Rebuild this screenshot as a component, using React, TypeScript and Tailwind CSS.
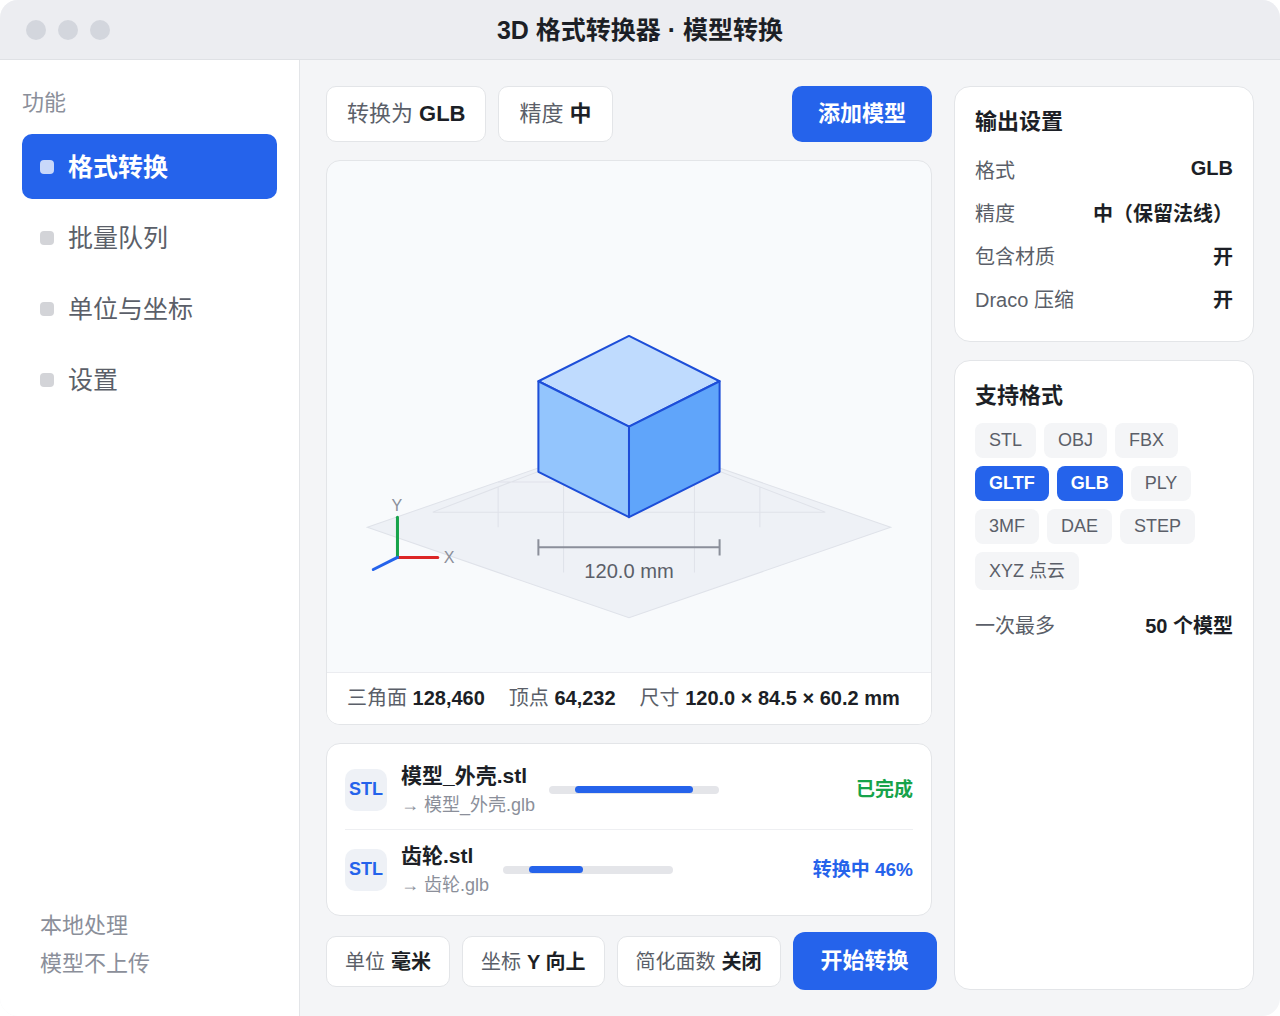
import React from 'react'

const navItems = ['格式转换', '批量队列', '单位与坐标', '设置']

const outputRows = [
  ['格式', 'GLB'],
  ['精度', '中（保留法线）'],
  ['包含材质', '开'],
  ['Draco 压缩', '开'],
]

const formats = ['STL', 'OBJ', 'FBX', 'GLTF', 'GLB', 'PLY', '3MF', 'DAE', 'STEP', 'XYZ 点云']
const activeFormats = ['GLTF', 'GLB']

const files = [
  { name: '模型_外壳', status: '已完成', tone: 'text-[#16a34a]', fill: 118 },
  { name: '齿轮', status: '转换中 46%', tone: 'text-[#2563eb]', fill: 54 },
]

const isLatin = (text: string) => /^[\w ]+$/.test(text)

function Option({ label, value, large = false }: { label: string; value: string; large?: boolean }) {
  return (
    <button
      type="button"
      className={`flex shrink-0 items-center gap-[6px] whitespace-nowrap rounded-[10px] border border-[#e3e5e8] bg-white text-[#5b5f69] ${
        large ? 'h-14 px-5 pb-px text-[22px]' : 'px-[18px] pt-[11px] pb-[9px] text-xl/[29px]'
      }`}
    >
      <span>{label}</span>
      <b className="font-bold text-[#1c1f26]">{value}</b>
    </button>
  )
}

function Row({ label, value }: { label: string; value: string }) {
  return (
    <div className="flex justify-between py-[7px] text-xl/[29px]">
      <dt className="text-[#5b5f69]">{label}</dt>
      <dd className={`font-bold text-[#1c1f26] ${isLatin(value) ? 'leading-[normal]' : ''}`}>{value}</dd>
    </div>
  )
}

function Viewport() {
  return (
    <svg viewBox="0 0 600 420" className="min-h-0 w-full flex-1" role="img" aria-label="模型预览">
      <polygon points="300,230 560,320 300,410 40,320" fill="#eef1f6" stroke="#dfe2e9" />
      <path
        d="M105 305H495M170 275H300M105 305L300 230L495 305M170 280V320M235 255V365M365 255V365M430 280V320"
        fill="none"
        stroke="#dfe2e9"
      />
      <g stroke="#1d4ed8" strokeWidth="2" strokeLinejoin="round">
        <polygon points="300,130 390,175 300,220 210,175" fill="#bfdbfe" />
        <polygon points="210,175 300,220 300,310 210,265" fill="#93c5fd" />
        <polygon points="390,175 300,220 300,310 390,265" fill="#60a5fa" />
      </g>
      <path d="M210 340H390M210 332V348M390 332V348" fill="none" stroke="#8b8f9a" strokeWidth="2" />
      <text x="300" y="370" textAnchor="middle" fontSize="20" fill="#5b5f69">
        120.0 mm
      </text>
      <g strokeWidth="3" strokeLinecap="round">
        <line x1="70" y1="350" x2="110" y2="350" stroke="#dc2626" />
        <line x1="70" y1="350" x2="70" y2="310" stroke="#16a34a" />
        <line x1="70" y1="350" x2="46" y2="362" stroke="#2563eb" />
      </g>
      <text x="116" y="356" fontSize="16" fill="#8b8f9a">
        X
      </text>
      <text x="64" y="304" fontSize="16" fill="#8b8f9a">
        Y
      </text>
    </svg>
  )
}

export default function App() {
  return (
    <div className="flex min-h-screen flex-col overflow-hidden rounded-[18px] bg-[#f4f5f7] font-['Liberation_Sans','Noto_Sans_CJK_SC',sans-serif] text-[#1c1f26]">
      <header className="grid h-[60px] shrink-0 grid-cols-[1fr_auto_1fr] items-center border-b border-[#dfe1e5] bg-[#ecedf1] px-[26px] pt-px">
        <div className="flex gap-3">
          <span className="size-5 rounded-full bg-[#d3d6dd]" />
          <span className="size-5 rounded-full bg-[#d3d6dd]" />
          <span className="size-5 rounded-full bg-[#d3d6dd]" />
        </div>
        <h1 className="text-[25px]/[38px] font-bold">3D 格式转换器 · 模型转换</h1>
      </header>

      <div className="flex flex-1">
        <aside className="flex w-[300px] shrink-0 flex-col border-r border-[#e3e5e8] bg-white px-[22px] py-[26px]">
          <h2 className="mb-[15px] text-[22px]/[33px] text-[#8b8f9a]">功能</h2>
          <nav className="flex flex-col gap-[6px]">
            {navItems.map((item, i) => (
              <a
                key={item}
                href="#"
                className={`flex h-[65px] items-center gap-[14px] rounded-[10px] px-[18px] text-[25px]/[38px] ${
                  i === 0 ? 'bg-[#2563eb] font-bold text-white' : 'text-[#5b5f69]'
                }`}
              >
                <span className={`size-[14px] rounded-[4px] ${i === 0 ? 'bg-white/75' : 'bg-[#d3d4d8]'}`} />
                <span className="pt-px">{item}</span>
              </a>
            ))}
          </nav>
          <p className="mt-auto px-[18px] pb-[7px] text-[22px]/[38px] text-[#8b8f9a]">
            本地处理
            <br />
            模型不上传
          </p>
        </aside>

        <main className="flex min-w-0 flex-1 gap-[22px] p-[26px]">
          <div className="flex min-w-0 flex-1 flex-col">
            <div className="mb-[18px] flex gap-3">
              <Option label="转换为" value="GLB" large />
              <Option label="精度" value="中" large />
              <button type="button" className="ml-auto h-14 rounded-[10px] bg-[#2563eb] px-[26px] pb-px text-[22px] font-bold text-white">
                添加模型
              </button>
            </div>

            <section className="flex flex-1 flex-col overflow-hidden rounded-[14px] border border-[#e3e5e8] bg-[#f8fafc]">
              <Viewport />
              <div className="flex gap-6 border-t border-[#ebecf0] bg-white px-5 py-[11px] text-xl/[29px] text-[#5b5f69]">
                <span>三角面 <b className="text-[#1c1f26]">128,460</b></span>
                <span>顶点 <b className="text-[#1c1f26]">64,232</b></span>
                <span>尺寸 <b className="text-[#1c1f26]">120.0 × 84.5 × 60.2 mm</b></span>
              </div>
            </section>

            <section className="mt-[18px] rounded-[14px] border border-[#e3e5e8] bg-white px-[18px] py-[6px]">
              {files.map((file, i) => (
                <div
                  key={file.name}
                  className={`flex items-center gap-[14px] ${i > 0 ? 'h-20 border-t border-[#eeeff2]' : 'h-[79px]'}`}
                >
                  <span className="flex size-[42px] shrink-0 items-center justify-center rounded-[10px] bg-[#eef1f6] pb-px text-lg font-bold text-[#2563eb]">
                    STL
                  </span>
                  <div>
                    <div className="text-[21px]/[31px] font-bold">{file.name}.stl</div>
                    <div className="text-lg/[29px] text-[#8b8f9a]">→ {file.name}.glb</div>
                  </div>
                  <div className="flex h-2 w-[170px] rounded bg-[#e4e5e9] px-[26px]">
                    <div className="h-[7px] rounded bg-[#2563eb]" style={{ width: file.fill }} />
                  </div>
                  <span className={`ml-auto pt-px text-[19px]/[28px] font-bold ${file.tone}`}>{file.status}</span>
                </div>
              ))}
            </section>

            <div className="mt-4 flex items-center gap-3">
              <Option label="单位" value="毫米" />
              <Option label="坐标" value="Y 向上" />
              <Option label="简化面数" value="关闭" />
              <button type="button" className="h-[58px] shrink-0 rounded-[12px] bg-[#2563eb] px-7 pb-px text-[22px] font-bold text-white">
                开始转换
              </button>
            </div>
          </div>

          <aside className="flex w-[300px] shrink-0 flex-col gap-[18px]">
            <section className="rounded-[16px] border border-[#e3e5e8] bg-white px-5 pt-[18px] pb-[19px]">
              <h2 className="mb-3 text-[22px]/[33px] font-bold">输出设置</h2>
              <dl>
                {outputRows.map(([label, value]) => (
                  <Row key={label} label={label} value={value} />
                ))}
              </dl>
            </section>
            <section className="flex-1 rounded-[16px] border border-[#e3e5e8] bg-white px-5 py-[18px]">
              <h2 className="mb-[11px] text-[22px]/[33px] font-bold">支持格式</h2>
              <div className="mb-[15px] flex flex-wrap gap-2">
                {formats.map((f) => (
                  <button
                    type="button"
                    key={f}
                    className={`rounded-[8px] px-[14px] py-[7px] text-lg ${isLatin(f) ? 'leading-[21px]' : 'leading-[24px]'} ${
                      activeFormats.includes(f) ? 'bg-[#2563eb] font-bold text-white' : 'bg-[#f4f5f7] text-[#5b5f69]'
                    }`}
                  >
                    {f}
                  </button>
                ))}
              </div>
              <dl>
                <Row label="一次最多" value="50 个模型" />
              </dl>
            </section>
          </aside>
        </main>
      </div>
    </div>
  )
}
